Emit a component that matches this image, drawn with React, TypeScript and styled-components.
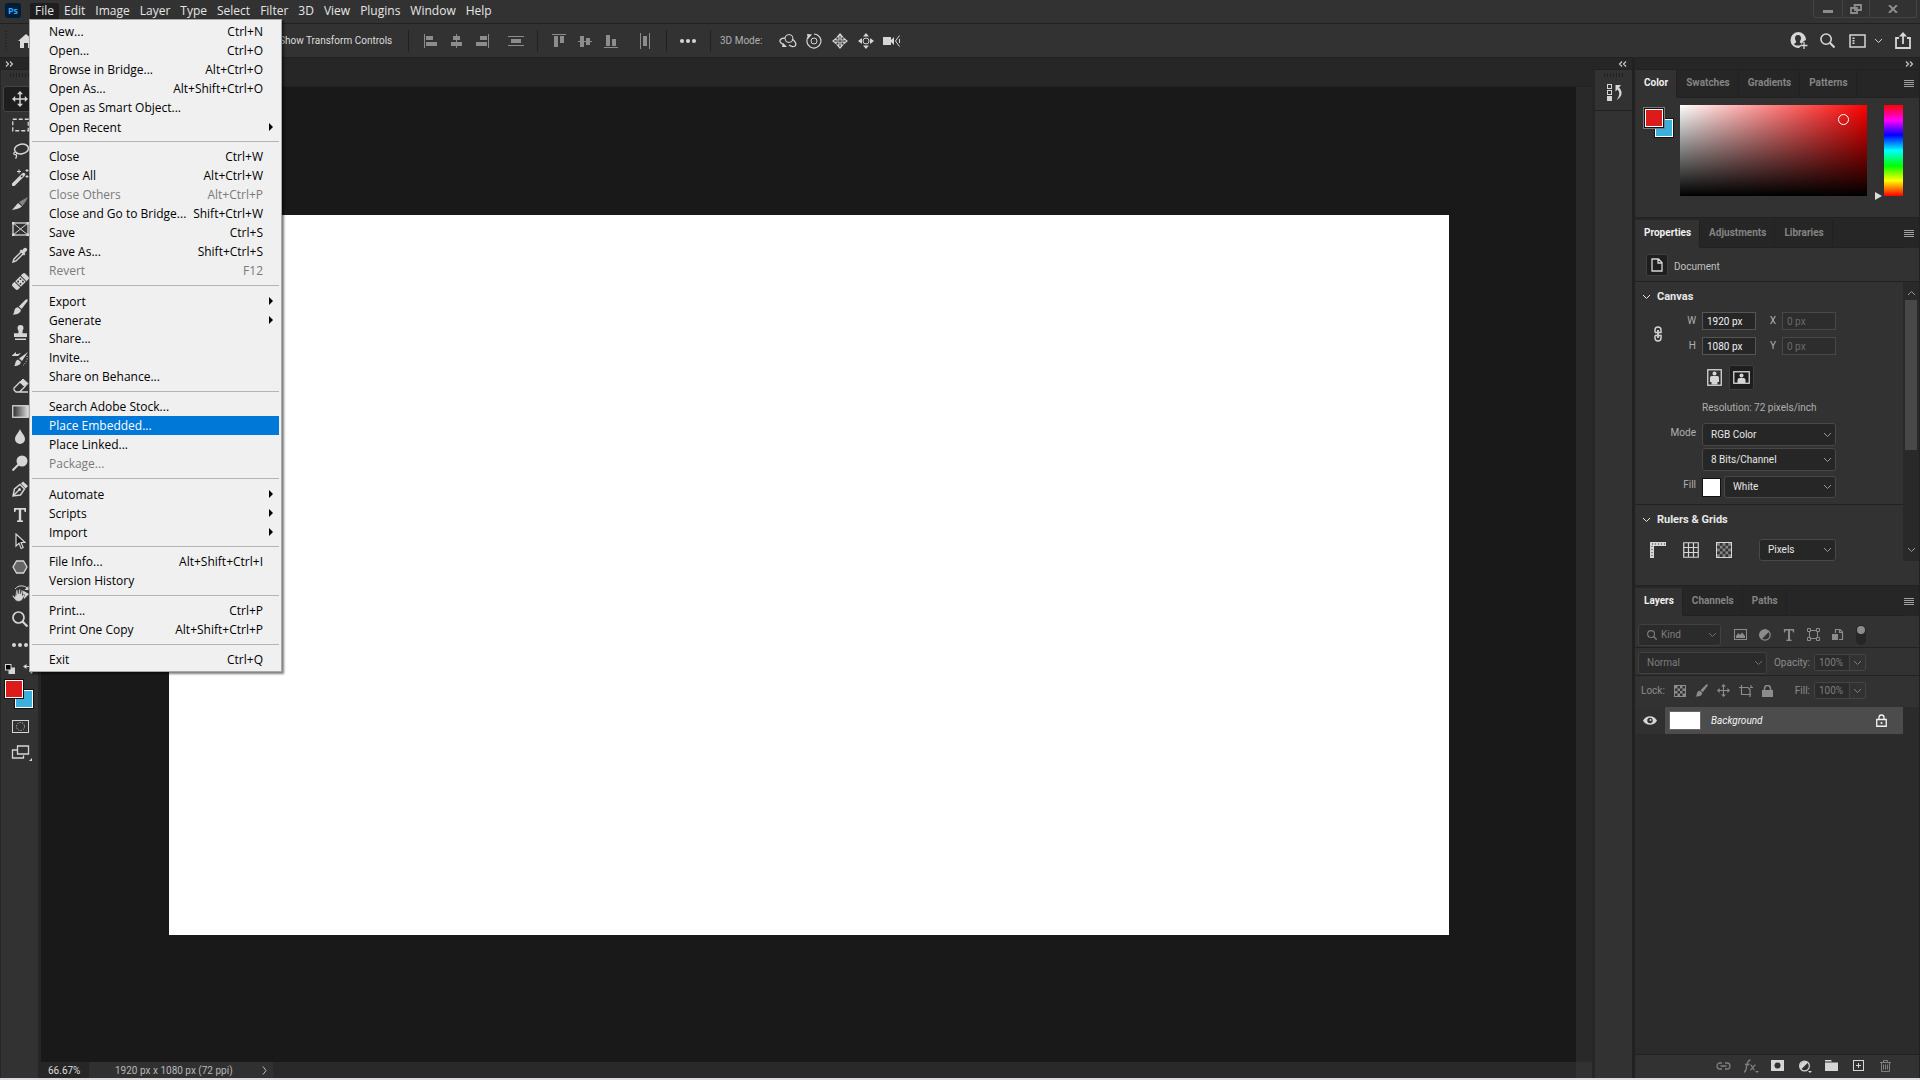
import React from "react";
import styled, { createGlobalStyle, css } from "styled-components";

const c = {
  bar: "#323232",
  dark: "#262626",
  line: "#212121",
  field: "#262626",
  edge: "#484848",
  icon: "#d6d6d6",
  dim: "#8c8c8c",
  text: "#dcdcdc",
};
const font = 'Roboto, "Open Sans", "Liberation Sans", sans-serif';
const menuFont = '"Open Sans", "Noto Sans", "Liberation Sans", sans-serif';

const Global = createGlobalStyle`
  * { box-sizing: border-box; }
  body { margin: 0; background: ${c.dark}; font-family: ${font}; font-size: 10px; line-height: 14px; color: ${c.text}; }
  button, input, select { font: inherit; color: inherit; margin: 0; }
  button { background: none; border: 0; padding: 0; display: flex; align-items: center; justify-content: center; }
  svg { display: block; flex: none; }
`;

const Page = styled.div`
  display: flex;
  flex-direction: column;
  height: 100vh;
  overflow: hidden;
  border-bottom: 2px solid #dfdbdf;
`;

/* ---------- menu bar ---------- */
const MenuBar = styled.header`
  display: flex;
  align-items: flex-start;
  height: 24px;
  padding-left: 5px;
  background: ${c.bar};
  border-bottom: 1px solid ${c.line};
  font-family: ${menuFont};
  font-size: 12px;
`;
const Logo = styled.div`
  width: 16px;
  height: 15px;
  margin: 3px 9px 0 0;
  border-radius: 3px;
  background: #001e36;
  color: #31a8ff;
  font-size: 9px;
  font-weight: 700;
  line-height: 15px;
  text-align: center;
`;
const MenuNav = styled.nav`
  display: flex;
  flex: 1;
  padding-top: 3px;
`;
const MenuSlot = styled.div`
  position: relative;
`;
const MenuTop = styled.button<{ $open?: boolean }>`
  height: 16px;
  padding: 0 5px;
  border-radius: 2px 2px 0 0;
  color: #e6e6e6;
  background: ${(p) => (p.$open ? "#1e1e1e" : "transparent")};
`;
const Dropdown = styled.div`
  position: absolute;
  z-index: 10;
  top: 16px;
  left: -1px;
  width: 253px;
  padding: 2px;
  border: 1px solid #a8a8a8;
  background: #f0f0f0;
  box-shadow: 2px 2px 2px rgba(0, 0, 0, 0.5);
`;
const MenuItem = styled.button<{ $active?: boolean; $sub?: boolean }>`
  width: 100%;
  height: 19px;
  padding: ${(p) => (p.$sub ? 2 : 0)}px 16px 0 17px;
  justify-content: space-between;
  white-space: nowrap;
  color: ${(p) => (p.$active ? "#fff" : "#000")};
  background: ${(p) => (p.$active ? "#0078d7" : "transparent")};
  &:disabled { color: #7a7a7a; }
`;
const SubArrow = styled.span`
  width: 4px;
  margin: 0 -10px 2px 0;
  border: 4px solid transparent;
  border-right: 0;
  border-left-color: #000;
`;
const MenuRule = styled.hr`
  height: 1px;
  margin: 5px 0;
  border: 0;
  background: #b4b4b4;
`;
const WindowControls = styled.div`
  display: grid;
  grid-template-columns: 28px 27px 47px;
  height: 18px;
  margin-right: 3px;
  border: 1px solid #444;
  border-top: 0;
  border-radius: 0 0 3px 3px;
  color: ${c.dim};
  button + button { border-left: 1px solid #444; }
`;

/* ---------- options bar ---------- */
const OptionsBar = styled.div`
  display: flex;
  align-items: center;
  height: 34px;
  padding: 0 9px 0 5px;
  background: ${c.bar};
  border-bottom: 1px solid ${c.line};
`;
const GripV = styled.span`
  width: 2px;
  height: 20px;
  margin-right: 10px;
  background: repeating-linear-gradient(${c.line} 0 1px, transparent 1px 3px);
`;
const CheckLabel = styled.label`
  display: flex;
  align-items: center;
  gap: 5px;
  margin-left: 227px;
  width: 146px;
  white-space: nowrap;
  input { width: 12px; height: 12px; }
`;
const Divider = styled.span`
  width: 1px;
  height: 22px;
  background: ${c.line};
`;
const IconGroup = styled.div<{ $gap?: number; $color?: string; $pad?: string }>`
  display: flex;
  align-items: center;
  gap: ${(p) => p.$gap ?? 12}px;
  padding: ${(p) => p.$pad ?? "0"};
  color: ${(p) => p.$color ?? c.icon};
`;
const Caption = styled.span`
  color: #b0b0b0;
`;
const Spacer = styled.span`
  flex: 1;
`;

/* ---------- workspace ---------- */
const Workspace = styled.div`
  display: flex;
  flex: 1;
  min-height: 0;
`;
const Column = styled.div<{ $w: number }>`
  display: flex;
  flex-direction: column;
  flex: none;
  width: ${(p) => p.$w}px;
`;
const Collapse = styled.div<{ $end?: boolean }>`
  display: flex;
  align-items: center;
  justify-content: ${(p) => (p.$end ? "flex-end" : "flex-start")};
  height: 12px;
  padding: 0 5px;
  background: ${c.dark};
  border-bottom: 1px solid ${c.line};
  color: #c8c8c8;
`;
const Toolbox = styled.aside`
  flex: 1;
  display: flex;
  flex-direction: column;
  margin: 0 3px 0 1px;
  background: ${c.bar};
`;
const Grip = styled.span`
  width: 20px;
  height: 4px;
  margin: 3px auto 9px;
  background: repeating-linear-gradient(90deg, ${c.line} 0 1px, transparent 1px 3px);
`;
const Tool = styled.button<{ $on?: boolean }>`
  width: 34px;
  height: 26px;
  margin-left: 2px;
  border-radius: 3px;
  color: ${c.icon};
  ${(p) => p.$on && css`background: #1e1e1e; border: 1px solid #444;`}
`;
const MiniRow = styled.div`
  display: flex;
  justify-content: space-between;
  padding: 6px 4px 5px;
  color: ${c.icon};
`;
const Swatches = styled.div<{ $framed?: boolean }>`
  position: relative;
  width: 30px;
  height: 30px;
  margin: ${(p) => (p.$framed ? "3px 0 0 1px" : "0 0 4px 3px")};
`;
const Swatch = styled.button<{ $c: string; $back?: boolean; $framed?: boolean }>`
  position: absolute;
  width: 20px;
  height: 20px;
  ${(p) => (p.$back ? "right: 0; bottom: 0;" : "left: 0; top: 0;")}
  border: 1px solid #111;
  background: ${(p) => p.$c};
  box-shadow: inset 0 0 0 1px #fff${(p) => (p.$framed ? ", 0 0 0 1px #7a7a7a" : "")};
`;

const Document = styled.main`
  flex: 1;
  min-width: 0;
  display: flex;
  flex-direction: column;
`;
const TabStrip = styled.div`
  height: 29px;
  background: ${c.dark};
  border-bottom: 1px solid ${c.line};
`;
const Stage = styled.div`
  flex: 1;
  display: flex;
  background: #191919;
`;
const Board = styled.div`
  flex: 1;
  display: flex;
  align-items: center;
  justify-content: center;
`;
const Artboard = styled.div`
  width: 1280px;
  max-width: 90%;
  aspect-ratio: 16 / 9;
  background: #fff;
`;
const Lane = styled.div`
  width: 16px;
  background: #292929;
`;
const Corner = styled.span`
  width: 16px;
  margin-left: auto;
  background: ${c.bar};
`;
const StatusBar = styled.footer`
  display: flex;
  height: 16px;
  line-height: 17px;
  background: #292929;
`;
const Zoom = styled.span`
  width: 48px;
  padding-left: 7px;
  background: ${c.dark};
`;
const DocSize = styled.button`
  width: 184px;
  padding: 0 6px 0 26px;
  justify-content: space-between;
  background: #303030;
  color: #b8b8b8;
`;

/* ---------- panels ---------- */
const Dock = styled.div`
  flex: 1;
  margin: 0 0 0 3px;
  background: ${c.bar};
`;
const DockGroup = styled.div`
  display: flex;
  flex-direction: column;
  align-items: center;
  height: 41px;
  border-bottom: 1px solid ${c.line};
  color: ${c.icon};
  ${Grip} { margin-bottom: 6px; }
`;
const Panels = styled(Column)`
  border-left: 3px solid ${c.line};
  border-right: 1px solid ${c.line};
`;
const Panel = styled.section<{ $grow?: boolean }>`
  display: flex;
  flex-direction: column;
  background: ${c.bar};
  ${(p) => p.$grow ? "flex: 1; min-height: 0;" : `border-bottom: 1px solid ${c.line}; margin-bottom: 2px;`}
`;
const Tabs = styled.div`
  display: flex;
  height: 28px;
  padding-right: 5px;
  background: ${c.dark};
`;
const Tab = styled.button<{ $on?: boolean }>`
  padding: 0 8px 2px 9px;
  font-weight: 700;
  border-right: 1px solid ${c.line};
  border-bottom: 1px solid ${(p) => (p.$on ? c.bar : c.line)};
  color: ${(p) => (p.$on ? "#f0f0f0" : "#848484")};
  background: ${(p) => (p.$on ? c.bar : "transparent")};
`;
const TabFill = styled.span`
  flex: 1;
  border-bottom: 1px solid ${c.line};
`;
const PanelMenu = styled.button`
  color: #a0a0a0;
`;
const ColorBody = styled.div`
  display: flex;
  padding: 7px 16px 21px 8px;
`;
const Field = styled.div`
  position: relative;
  flex: 1;
  height: 91px;
  margin-left: 6px;
  background: linear-gradient(to top, #000, transparent), linear-gradient(to right, #fff, #f00);
`;
const Ring = styled.span`
  position: absolute;
  top: 9px;
  right: 18px;
  width: 11px;
  height: 11px;
  border: 1px solid #fff;
  border-radius: 50%;
`;
const Pointer = styled.span`
  align-self: flex-end;
  width: 7px;
  margin: 0 2px -4px 8px;
  border: 4px solid transparent;
  border-right: 0;
  border-left: 7px solid #dcdcdc;
`;
const Hue = styled.div`
  width: 19px;
  background: linear-gradient(#f00, #f0f 17%, #00f 33%, #0ff 50%, #0f0 67%, #ff0 83%, #f00);
`;

const DocRow = styled.div`
  display: flex;
  align-items: center;
  gap: 6px;
  height: 34px;
  padding-left: 11px;
  border-bottom: 1px solid ${c.line};
  color: #c0c0c0;
  span { padding-top: 4px; }
`;
const IconBox = styled.button<{ $w?: number }>`
  width: ${(p) => p.$w ?? 22}px;
  height: ${(p) => p.$w ?? 22}px;
  border: 1px solid #3e3e3e;
  border-radius: 2px;
  background: #1e1e1e;
  color: ${c.icon};
`;
const PropScroll = styled.div`
  display: flex;
  margin-bottom: 24px;
`;
const PropContent = styled.div`
  flex: 1;
`;
const ScrollBar = styled.div`
  flex: none;
  width: 16px;
  display: flex;
  flex-direction: column;
  align-items: center;
  padding: 8px 0;
  background: #292929;
  color: #9a9a9a;
`;
const Thumb = styled.div`
  width: 12px;
  height: 150px;
  margin: 4px 0 auto;
  background: #484848;
`;
const Section = styled.div<{ $last?: boolean }>`
  padding: 0 0 ${(p) => (p.$last ? 0 : 6)}px 14px;
  ${(p) => !p.$last && `border-bottom: 1px solid ${c.line};`}
`;
const Heading = styled.button`
  gap: 6px;
  height: 30px;
  margin-left: -7px;
  font-size: 11px;
  font-weight: 700;
  color: #e8e8e8;
`;
const Row = styled.div<{ $top?: number }>`
  display: grid;
  grid-template-columns: 18px 23px 54px 14px 54px;
  column-gap: 6px;
  row-gap: 7px;
  align-items: center;
  margin-top: ${(p) => p.$top ?? 0}px;
  color: #b0b0b0;
`;
const LinkCell = styled.button`
  grid-row: span 2;
  color: ${c.icon};
`;
const Label = styled.label<{ $wide?: boolean }>`
  text-align: right;
  ${(p) => p.$wide && "grid-column: span 2; padding-bottom: 4px;"}
`;
const Wide = styled.div`
  grid-column: 3 / -1;
  display: flex;
  align-items: center;
  gap: 3px;
`;
const Input = styled.input`
  width: 100%;
  height: 18px;
  padding: 0 4px;
  border: 1px solid #555;
  background: ${c.field};
  color: #f0f0f0;
  &:disabled { border-color: #484848; background: #2d2d2d; color: #6a6a6a; }
`;
const SelectBox = styled.div<{ $w?: number; $h?: number; $dim?: boolean }>`
  display: grid;
  align-items: center;
  ${(p) => (p.$w ? `width: ${p.$w}px;` : "flex: 1;")}
  height: ${(p) => p.$h ?? 22}px;
  border: 1px solid ${(p) => (p.$dim ? "#404040" : c.edge)};
  border-radius: 3px;
  background: ${(p) => (p.$dim ? "#2b2b2b" : c.field)};
  color: ${(p) => (p.$dim ? "#7c7c7c" : "#e6e6e6")};
  > * { grid-area: 1 / 1; }
  > svg { justify-self: end; margin-right: 3px; color: #9a9a9a; pointer-events: none; opacity: ${(p) => (p.$dim ? 0.6 : 1)}; }
`;
const Select = styled.select<{ $pad?: number }>`
  appearance: none;
  width: 100%;
  height: 100%;
  padding: 0 16px 0 ${(p) => p.$pad ?? 8}px;
  border: 0;
  background: none;
  opacity: 1;
`;
const SearchSlot = styled.span`
  justify-self: start;
  margin-left: 8px;
  pointer-events: none;
`;
const FillChip = styled.span`
  width: 19px;
  height: 19px;
  border: 1px solid #111;
  background: #fff;
`;
const RulerRow = styled.div`
  display: flex;
  align-items: center;
  justify-content: space-between;
  padding: 4px 67px 0 1px;
  color: ${c.icon};
`;

const LayerRow = styled.div<{ $h: number; $top?: number; $bottom?: number; $line?: boolean }>`
  display: flex;
  align-items: center;
  height: ${(p) => p.$h}px;
  padding: ${(p) => p.$top ?? 0}px 53px ${(p) => p.$bottom ?? 0}px 3px;
  color: #8c8c8c;
  ${(p) => p.$line && `border-bottom: 1px solid ${c.line};`}
  label { margin-left: auto; padding-right: 4px; }
`;
const Percent = styled.div`
  display: flex;
  width: 52px;
  height: 17px;
  border: 1px solid #444;
  border-radius: 2px;
  color: #7c7c7c;
  input { width: 35px; padding: 0 4px; border: 0; border-right: 1px solid #444; background: #2b2b2b; }
  button { flex: 1; }
`;
const Toggle = styled.button`
  width: 10px;
  height: 20px;
  padding-top: 1px;
  align-items: flex-start;
  border-radius: 5px;
  background: #262626;
  &::before { content: ""; width: 8px; height: 8px; border-radius: 50%; background: #8c8c8c; }
`;
const LayerList = styled.div`
  flex: 1;
  background: #2b2b2b;
`;
const Layer = styled.div`
  display: flex;
  height: 27px;
`;
const Eye = styled.button`
  width: 30px;
  background: #303030;
  color: ${c.icon};
`;
const LayerBody = styled.div`
  flex: 1;
  display: flex;
  align-items: center;
  gap: 10px;
  margin-right: 16px;
  padding: 0 16px 0 4px;
  background: #4c4c4c;
  font-style: italic;
  color: #f4f4f4;
`;
const Thumbnail = styled.span`
  width: 32px;
  height: 19px;
  border: 1px solid #666;
  background: #fff;
`;
const LayerFooter = styled.div`
  display: flex;
  align-items: center;
  justify-content: flex-end;
  height: 24px;
  padding: 0 20px 2px 0;
  border-top: 1px solid ${c.line};
`;
const FooterButton = styled.button<{ $faint?: boolean }>`
  width: 27px;
  color: ${(p) => (p.$faint ? "#808080" : c.icon)};
`;

/* ---------- drawings ---------- */
type IcoProps = { w?: number; h?: number; children: React.ReactNode };
const Ico = ({ w = 16, h = 16, children }: IcoProps) => (
  <svg width={w} height={h} viewBox={`0 0 ${w} ${h}`} fill="none" stroke="currentColor" aria-hidden="true">
    {children}
  </svg>
);
const F = { fill: "currentColor", stroke: "none" };

const Chevron = () => <Ico w={9} h={6}><path d="M1 1l3.500 3.500L8 1" /></Ico>;
const ChevronUp = () => <Ico w={9} h={6}><path d="M1 5l3.500-3.500L8 5" /></Ico>;
const Double = ({ left }: { left?: boolean }) => (
  <Ico w={9} h={6}><path d={left ? "M4 .5L1.500 3 4 5.500M8 .5L5.500 3 8 5.500" : "M1 .5L3.500 3 1 5.500M5 .5L7.500 3 5 5.500"} strokeWidth="1.200" /></Ico>
);
const Burger = () => <Ico w={10} h={8}><path d="M0 .5h10M0 2.500h10M0 4.500h10M0 6.500h10" /></Ico>;
const Dots = () => <Ico w={16} h={6}><g {...F}><circle cx="2" cy="3" r="2" /><circle cx="8" cy="3" r="2" /><circle cx="14" cy="3" r="2" /></g></Ico>;
const MoveGlyph = ({ s = 16 }: { s?: number }) => (
  <svg width={s} height={s} viewBox="0 0 16 16" fill="currentColor" aria-hidden="true">
    <path d="M8 0l3 3.200H8.700v4.100h4.100V5L16 8l-3.200 3V8.700H8.700v4.100H11L8 16l-3-3.200h2.300V8.700H3.200V11L0 8l3.200-3v2.300h4.100V3.200H5z" />
  </svg>
);
const BrushGlyph = ({ s = 16 }: { s?: number }) => (
  <svg width={s} height={s} viewBox="0 0 16 16" fill="currentColor" aria-hidden="true">
    <path d="M15.500.5c.5.500.3 1.300-.2 2L9.600 10 6.800 7.600 13.500.8c.700-.6 1.500-.8 2-.3zM6 8.300l2.800 2.400c.2 2.500-2 4.800-8.300 4.800 2-1.500 1.500-3 2-4.500.5-1.700 2-2.700 3.500-2.700z" />
  </svg>
);
const SearchGlyph = ({ s = 16 }: { s?: number }) => (
  <svg width={s} height={s} viewBox="0 0 16 16" fill="none" stroke="currentColor" strokeWidth="1.700" aria-hidden="true">
    <circle cx="6.500" cy="6.500" r="5.500" /><path d="M10.500 10.500l5 5" strokeWidth="2.200" />
  </svg>
);
const TGlyph = ({ s = 14 }: { s?: number }) => (
  <svg width={s} height={s} viewBox="0 0 14 14" fill="currentColor" aria-hidden="true">
    <path d="M1 0h12v4h-1.300L11 1.800H8.200v10.400l1.800.4V14H4v-1.400l1.800-.4V1.800H3L2.300 4H1z" />
  </svg>
);
const HalfCircle = ({ s = 12 }: { s?: number }) => (
  <svg width={s} height={s} viewBox="0 0 12 12" fill="none" stroke="currentColor" strokeWidth="1.200" aria-hidden="true">
    <circle cx="6" cy="6" r="5.200" /><path d="M9.700 2.300A5.200 5.200 0 0 0 2.300 9.700z" fill="currentColor" />
  </svg>
);
const Checker = ({ w = 12 }: { w?: number }) => {
  const n = w === 12 ? 4 : 5;
  const cells = [];
  for (let y = 0; y < n; y++) for (let x = 0; x < n; x++) if ((x + y) % 2 === 0) cells.push(<rect key={`${x}-${y}`} x={1 + (x * (w - 2)) / n} y={1 + (y * (w - 2)) / n} width={(w - 2) / n} height={(w - 2) / n} />);
  return <Ico w={w} h={w}><rect x=".5" y=".5" width={w - 1} height={w - 1} /><g {...F} opacity={w === 12 ? 1 : 0.5}>{cells}</g></Ico>;
};

const tools: [string, React.ReactNode][] = [
  ["Move", <MoveGlyph />],
  ["Marquee", <Ico w={17} h={14}><rect x=".75" y="1.250" width="15.500" height="11.500" strokeWidth="1.300" strokeDasharray="4 2" /></Ico>],
  ["Lasso", <Ico w={17} h={16}><ellipse cx="9.500" cy="6" rx="7" ry="4.800" strokeWidth="1.500" transform="rotate(-10 9.500 6)" /><path d="M3 9c-2 1-1.500 2.800.3 2.600s1.700-2.200.2-2.400M4 11.500c1 1.500.5 3-.5 4" strokeWidth="1.200" /></Ico>],
  ["Magic wand", <Ico w={17} h={17}><path d="M1.500 15.500L10 7l1.500-1.500" strokeWidth="3.500" strokeLinecap="round" /><path d="M9 8l1.500-1.500" stroke="#323232" strokeWidth="1.500" /><path d="M7 .5v4M5 2.500h4M15 0v3M13.500 1.500h3M15 6v3M13.500 7.500h3" /></Ico>],
  ["Slice", <Ico w={17} h={15}><path d="M0 14l6-7 4 3.500C7 13 3 13.500 0 14z" {...F} /><path d="M7 6l9-5-2 4-3.500 5z" {...F} opacity=".5" /></Ico>],
  ["Frame", <Ico w={17} h={14}><rect x="1" y="1" width="15" height="12" strokeWidth="1.300" /><path d="M1 1l15 12M16 1L1 13" /><path d="M0 0h2.500v2.500H0zM14.500 0H17v2.500h-2.500zM0 11.500h2.500V14H0zM14.500 11.500H17V14h-2.500z" {...F} /></Ico>],
  ["Eyedropper", <Ico w={16} h={16}><path d="M9 5L2 12l-1 3 3-1 7-7" strokeWidth="1.400" /><path d="M7.500 4L9 2.500l1.200 1C11.500 1.500 13 0 14.600 1.400S14.500 4.500 12.500 6l1 1L12 8.500z" {...F} /></Ico>],
  ["Healing brush", <Ico w={17} h={17}><g transform="rotate(-45 8.500 8.500)"><path d="M1.500 4.500h2.500v8H1.500a2 2 0 0 1-2-2v-4a2 2 0 0 1 2-2zM13 4.500h2.500a2 2 0 0 1 2 2v4a2 2 0 0 1-2 2H13z" {...F} /><path d="M5 4.500h7v8H5z" {...F} /><g fill="#323232" stroke="none"><circle cx="6.800" cy="6.800" r=".9" /><circle cx="10.200" cy="6.800" r=".9" /><circle cx="6.800" cy="10.200" r=".9" /><circle cx="10.200" cy="10.200" r=".9" /></g></g></Ico>],
  ["Brush", <BrushGlyph />],
  ["Clone stamp", <Ico w={15} h={16}><path d="M7.500 0a3 3 0 0 1 3 3c0 1.500-1 2.300-1 3.500v1.800H14V12H1V8.300h4.500V6.500c0-1.200-1-2-1-3.500a3 3 0 0 1 3-3zM2 13.500h11V15H2z" {...F} /></Ico>],
  ["History brush", <Ico w={17} h={16}><path d="M16 1l-6 9-3-2.500zM6 8.500l2.800 2.500c0 2-2 4-6.800 4 1.200-1 1-2 1.400-3.500S5 8.800 6 8.500zM0 4.500L4 1v2c2 0 3.500-.5 5-1L6 5H0z" {...F} /><path d="M15 5c1 3-1 7-4 9.500" strokeDasharray="1 1.500" /></Ico>],
  ["Eraser", <Ico w={17} h={15}><path d="M8 4l5 4.500L16 5.500 11 1z" fill="currentColor" /><path d="M8 4l-6 6v2l2 2h3.500L13 8.500zM6 14h10" strokeWidth="1.300" /></Ico>],
  ["Gradient", <Ico w={17} h={13}><defs><linearGradient id="ramp"><stop stopColor="#2a2a2a" /><stop offset="1" stopColor="#ddd" /></linearGradient></defs><rect x=".75" y=".75" width="15.500" height="11.500" fill="url(#ramp)" strokeWidth="1.300" /></Ico>],
  ["Blur", <Ico w={12} h={16}><path d="M6 0c1.500 4 5 6.500 5 10a5 5 0 0 1-10 0c0-3.500 3.500-6 5-10z" {...F} /></Ico>],
  ["Dodge", <Ico w={16} h={16}><circle cx="10" cy="6" r="5.500" {...F} /><path d="M7 9l-6.500 6.500" strokeWidth="2" /></Ico>],
  ["Pen", <Ico w={16} h={16}><path d="M1 15l1.500-7L8 3.500l4.500 4.500L8.500 14zM1 15l6-6" strokeWidth="1.400" /><circle cx="7.500" cy="8.500" r="1.500" {...F} /><path d="M9 2.500l2-2 5 4.500-2.500 2.500z" {...F} /></Ico>],
  ["Type", <TGlyph />],
  ["Path selection", <Ico w={12} h={17}><path d="M2 1v12l3-2.800 2.200 5.300 2-1L7 9.500h4z" fill="#1c1c1c" strokeWidth="1.200" /></Ico>],
  ["Polygon", <Ico w={16} h={14}><path d="M4.500 1h7L15 7l-3.500 6h-7L1 7z" fill="#666" strokeWidth="1.300" /></Ico>],
  ["Hand", <Ico w={17} h={17}><path d="M3 4C6 0 12 0 15 3" /><path d="M16.500 1v4h-4zM10 5l7 4-5 5z" {...F} /><path d="M3 6.500l1 4V5l1.500-.2.7 4L7 4l1.400.3-.2 4.700 1.500-4 1.300.6-.8 5L12 9l1 1-3 5c-1 1.500-5 2-6.500.2L0 11l1-.8L3 12z" fill="currentColor" stroke="#323232" strokeWidth=".5" /></Ico>],
  ["Zoom", <SearchGlyph />],
  ["More tools", <Dots />],
];

type Entry = [string, string?, ("sub" | "off" | "on")?];
const fileMenu: Entry[][] = [
  [["New...", "Ctrl+N"], ["Open...", "Ctrl+O"], ["Browse in Bridge...", "Alt+Ctrl+O"], ["Open As...", "Alt+Shift+Ctrl+O"], ["Open as Smart Object..."], ["Open Recent", "", "sub"]],
  [["Close", "Ctrl+W"], ["Close All", "Alt+Ctrl+W"], ["Close Others", "Alt+Ctrl+P", "off"], ["Close and Go to Bridge...", "Shift+Ctrl+W"], ["Save", "Ctrl+S"], ["Save As...", "Shift+Ctrl+S"], ["Revert", "F12", "off"]],
  [["Export", "", "sub"], ["Generate", "", "sub"], ["Share..."], ["Invite..."], ["Share on Behance..."]],
  [["Search Adobe Stock..."], ["Place Embedded...", "", "on"], ["Place Linked..."], ["Package...", "", "off"]],
  [["Automate", "", "sub"], ["Scripts", "", "sub"], ["Import", "", "sub"]],
  [["File Info...", "Alt+Shift+Ctrl+I"], ["Version History"]],
  [["Print...", "Ctrl+P"], ["Print One Copy", "Alt+Shift+Ctrl+P"]],
  [["Exit", "Ctrl+Q"]],
];
const menus = ["Edit", "Image", "Layer", "Type", "Select", "Filter", "3D", "View", "Plugins", "Window", "Help"];

function FileMenu() {
  return (
    <Dropdown role="menu">
      {fileMenu.map((group, i) => (
        <React.Fragment key={i}>
          {i > 0 && <MenuRule />}
          {group.map(([name, keys, kind]) => (
            <MenuItem key={name} role="menuitem" disabled={kind === "off"} $active={kind === "on"} $sub={kind === "sub"}>
              <span>{name}</span>
              {kind === "sub" ? <SubArrow /> : <span>{keys}</span>}
            </MenuItem>
          ))}
        </React.Fragment>
      ))}
    </Dropdown>
  );
}

function Options() {
  return (
    <OptionsBar>
      <GripV />
      <Ico w={18} h={16}><path d="M9 1l8 7h-2v7h-4v-5H7v5H3V8H1z" {...F} /></Ico>
      <CheckLabel><input type="checkbox" />Show Transform Controls</CheckLabel>
      <Divider />
      <IconGroup $pad="0 13px 0 15px" $color="#8c8c8c">
        <Ico w={14} h={14}><path d="M.5 0v14" /><path d="M2 2h7v4H2zM2 8h11v4H2z" {...F} /></Ico>
        <Ico w={14} h={14}><path d="M6.500 0v14" /><path d="M3 2h7v4H3zM1 8h11v4H1z" {...F} /></Ico>
        <Ico w={14} h={14}><path d="M12.500 0v14" /><path d="M4 2h7v4H4zM0 8h11v4H0z" {...F} /></Ico>
        <IconGroup $pad="0 0 0 6px" $color="inherit">
          <Ico w={16} h={12}><path d="M0 1.500h16M0 10.500h16" /><path d="M3 4h10v4H3z" {...F} /></Ico>
        </IconGroup>
      </IconGroup>
      <Divider />
      <IconGroup $pad="0 14px" $color="#8c8c8c">
        <Ico w={14} h={14}><path d="M0 .5h14" /><path d="M2 2h4v11H2zM8 2h4v7H8z" {...F} /></Ico>
        <Ico w={14} h={14}><path d="M0 7.500h14" /><path d="M2 2h4v11H2zM8 4h4v7H8z" {...F} /></Ico>
        <Ico w={14} h={14}><path d="M0 13.500h14" /><path d="M2 1h4v11H2zM8 5h4v7H8z" {...F} /></Ico>
        <IconGroup $pad="0 0 0 8px" $color="inherit">
          <Ico w={14} h={16}><path d="M2.500 0v16M11.500 0v16" /><path d="M5 3h4v10H5z" {...F} /></Ico>
        </IconGroup>
      </IconGroup>
      <Divider />
      <IconGroup $pad="0 14px 0 13px"><Dots /></IconGroup>
      <Divider />
      <IconGroup $pad="0 0 0 9px" $gap={17}>
        <Caption>3D Mode:</Caption>
        <IconGroup $gap={8}>
          <Ico w={18} h={16}><circle cx="10" cy="5.500" r="4" /><path d="M6 5C2 5 0 7 1.500 9.500L5 12M13 6c3 2 5 5 3 7-1.500 1-4 .5-6-1" strokeWidth="1.300" /><path d="M3 14l1-4 4 4z" {...F} /></Ico>
          <Ico w={18} h={16}><circle cx="9" cy="8" r="3" /><path d="M4 3a7 7 0 1 0 5-2" strokeWidth="1.200" /><path d="M2 1l5 .5L3 6z" {...F} /></Ico>
          <Ico w={18} h={16}><path d="M9 1l2.500 3H10v3h3V5.500L16 8l-3 2.500V9h-3v3h1.500L9 15l-2.500-3H8V9H5v1.500L2 8l3-2.500V7h3V4H6.500z" strokeWidth="1.200" /></Ico>
          <Ico w={18} h={16}><circle cx="9" cy="8" r="3" /><path d="M9 0l3 3.500H6zM9 16l-3-3.500h6zM1 8l4-3v6zM17 8l-4-3v6z" {...F} /></Ico>
          <Ico w={18} h={14}><path d="M0 3h8v8H0zM8 6l3-3v8L8 8z" {...F} /><path d="M16.500 1.500L12.500 7l4 5.500M16.500 5v4" /></Ico>
        </IconGroup>
      </IconGroup>
      <Spacer />
      <IconGroup>
        <Ico w={18} h={18}><path d="M8 0a8 8 0 0 1 8 8l-2 1a8 8 0 0 0-3 5l-2 2A8 8 0 1 1 8 0z" {...F} /><path d="M8 3c2.200 0 3 1.500 3 3.200S9.800 9 9.800 10s1.700 1 2.200 2c-1 2-7 2-8 0 .5-1 2.200-1 2.200-2S5 8 5 6.200 5.800 3 8 3z" fill="#323232" stroke="none" /><path d="M14 10v7M10.500 13.500h7" strokeWidth="1.300" /></Ico>
        <SearchGlyph s={15} />
        <IconGroup $pad="0 0 0 2px" $gap={8}>
          <Ico w={17} h={14}><rect x="1" y="1" width="15" height="12" strokeWidth="1.500" /><path d="M4.500 3.500v7" strokeWidth="2" strokeDasharray="1.500 1" /></Ico>
          <Chevron />
        </IconGroup>
        <Ico w={16} h={17}><path d="M4 6H1v10h14V6h-3M8 12V2" strokeWidth="1.800" /><path d="M4 4.500L8 0l4 4.500z" {...F} /></Ico>
      </IconGroup>
    </OptionsBar>
  );
}

function PanelTabs({ names }: { names: string[] }) {
  return (
    <Tabs role="tablist">
      {names.map((n, i) => <Tab key={n} role="tab" aria-selected={i === 0} $on={i === 0}>{n}</Tab>)}
      <TabFill />
      <PanelMenu aria-label="Panel menu"><Burger /></PanelMenu>
    </Tabs>
  );
}

function ColorPanel() {
  return (
    <Panel>
      <PanelTabs names={["Color", "Swatches", "Gradients", "Patterns"]} />
      <ColorBody>
        <Swatches $framed>
          <Swatch $c="#3bb0dc" $back aria-label="Background color" />
          <Swatch $c="#dc1b1b" $framed aria-label="Foreground color" />
        </Swatches>
        <Field><Ring /></Field>
        <Pointer />
        <Hue />
      </ColorBody>
    </Panel>
  );
}

function PropertiesPanel() {
  return (
    <Panel>
      <PanelTabs names={["Properties", "Adjustments", "Libraries"]} />
      <DocRow>
        <IconBox aria-label="Document"><Ico w={12} h={14}><path d="M1 1h6.500L11 4.500V13H1zM7 1v4h4" strokeWidth="1.300" /></Ico></IconBox>
        <span>Document</span>
      </DocRow>
      <PropScroll>
        <PropContent>
          <Section>
            <Heading><Chevron />Canvas</Heading>
            <Row>
              <LinkCell aria-label="Link width and height"><Ico w={10} h={16}><path d="M2 6.500V4a3 3 0 0 1 6 0v2.500H6M2 6.500h2M2 9.500V12a3 3 0 0 0 6 0V9.500H6M2 9.500h2" strokeWidth="1.400" /><path d="M5 4v8" strokeWidth="1.800" /></Ico></LinkCell>
              <Label htmlFor="w">W</Label><Input id="w" defaultValue="1920 px" />
              <Label htmlFor="x">X</Label><Input id="x" defaultValue="0 px" disabled />
              <Label htmlFor="h">H</Label><Input id="h" defaultValue="1080 px" />
              <Label htmlFor="y">Y</Label><Input id="y" defaultValue="0 px" disabled />
            </Row>
            <Row $top={10}>
              <Wide>
                <IconGroup $pad="0 4px 0 5px">
                  <Ico w={15} h={17}><rect x=".75" y=".75" width="13.500" height="15.500" strokeWidth="1.300" /><circle cx="7.500" cy="4.500" r="2" {...F} /><path d="M3 9c0-1.500 1-2 2-2h5c1 0 2 .5 2 2v4h-1.500v2.500h-6V13H3z" {...F} /></Ico>
                </IconGroup>
                <IconBox $w={25} aria-label="Landscape"><Ico w={17} h={13}><rect x=".75" y=".75" width="15.500" height="11.500" strokeWidth="1.300" /><circle cx="8.500" cy="4.500" r="2" {...F} /><path d="M4.500 12V9c0-1.300 1-2 2-2h4c1 0 2 .7 2 2v3z" {...F} /></Ico></IconBox>
              </Wide>
            </Row>
            <Row $top={11}><Wide>Resolution: 72 pixels/inch</Wide></Row>
            <Row $top={8}>
              <Label $wide htmlFor="mode">Mode</Label>
              <Wide><SelectBox $h={23}><Select id="mode"><option>RGB Color</option></Select><Chevron /></SelectBox></Wide>
            </Row>
            <Row $top={2}>
              <Wide><SelectBox $h={23}><Select aria-label="Bit depth"><option>8 Bits/Channel</option></Select><Chevron /></SelectBox></Wide>
            </Row>
            <Row $top={5}>
              <Label $wide htmlFor="fill">Fill</Label>
              <Wide><FillChip /><SelectBox><Select id="fill"><option>White</option></Select><Chevron /></SelectBox></Wide>
            </Row>
          </Section>
          <Section $last>
            <Heading><Chevron />Rulers &amp; Grids</Heading>
            <RulerRow>
              <IconGroup $gap={17}>
                <Ico w={16} h={16}><path d="M0 0h16v4H4v12H0z" {...F} /><path d="M2 2h14M2 4v12" stroke="#323232" strokeDasharray="1 2" /></Ico>
                <Ico w={16} h={16}><path d="M.75 .75h14.500v14.500H.75zM5.500 1v14M10.500 1v14M1 5.500h14M1 10.500h14" strokeWidth="1.200" /></Ico>
                <Checker w={16} />
              </IconGroup>
              <SelectBox $w={77}><Select aria-label="Units"><option>Pixels</option></Select><Chevron /></SelectBox>
            </RulerRow>
          </Section>
        </PropContent>
        <ScrollBar><ChevronUp /><Thumb /><Chevron /></ScrollBar>
      </PropScroll>
    </Panel>
  );
}

function LayersPanel() {
  return (
    <Panel $grow>
      <PanelTabs names={["Layers", "Channels", "Paths"]} />
      <LayerRow $h={32} $top={6} $line>
        <SelectBox $w={89} $dim>
          <Select $pad={22} aria-label="Filter kind" disabled><option>Kind</option></Select>
          <SearchSlot><SearchGlyph s={10} /></SearchSlot>
          <Chevron />
        </SelectBox>
        <IconGroup $pad="0 0 0 13px" $color="#8c8c8c">
          <Ico w={13} h={11}><rect x=".5" y=".5" width="12" height="10" /><path d="M2 9V7l2.500-3L6 6l2-2.500L11 7v2z" {...F} /></Ico>
          <HalfCircle />
          <TGlyph s={12} />
          <Ico w={13} h={13}><path d="M2.500 2.500h8v8h-8z" /><path d="M.5 .5h3v3h-3zM9.500 .5h3v3h-3zM.5 9.500h3v3h-3zM9.500 9.500h3v3h-3z" fill="#323232" /></Ico>
          <Ico w={12} h={13}><path d="M3.500 5V1.500H8L10.500 4v7.500H7M7.500 1.500v3h3" strokeWidth="1.200" /><path d="M0 6h6v6H0z" {...F} /></Ico>
          <Toggle aria-label="Layer filtering" />
        </IconGroup>
      </LayerRow>
      <LayerRow $h={28} $top={2} $line>
        <SelectBox $w={129} $dim><Select aria-label="Blend mode" disabled><option>Normal</option></Select><Chevron /></SelectBox>
        <label htmlFor="opacity">Opacity:</label>
        <Percent><input id="opacity" defaultValue="100%" /><button aria-label="Opacity slider"><Chevron /></button></Percent>
      </LayerRow>
      <LayerRow $h={31} $bottom={2}>
        <IconGroup $gap={9} $pad="0 0 0 3px" $color="#8c8c8c">
          Lock:
          <Checker />
          <BrushGlyph s={13} />
          <MoveGlyph s={13} />
          <Ico w={14} h={12}><path d="M2.500 0v9.500H12M0 2.500h9l2 2V12" strokeWidth="1.200" /><path d="M12 0v2M11 2.500h3" /></Ico>
          <Ico w={11} h={12}><path d="M2.500 5V3.500a3 3 0 0 1 6 0V5" strokeWidth="1.500" /><path d="M0 5h11v7H0z" {...F} /></Ico>
        </IconGroup>
        <label htmlFor="lfill">Fill:</label>
        <Percent><input id="lfill" defaultValue="100%" /><button aria-label="Fill slider"><Chevron /></button></Percent>
      </LayerRow>
      <LayerList>
        <Layer>
          <Eye aria-label="Visibility"><Ico w={14} h={9}><path d="M0 4.500C3-1.300 11-1.300 14 4.500 11 10.300 3 10.300 0 4.500z" {...F} /><circle cx="7" cy="4.500" r="2.700" fill="#303030" stroke="none" /><circle cx="7.500" cy="4" r="1" {...F} /></Ico></Eye>
          <LayerBody>
            <Thumbnail />
            Background
            <Spacer />
            <Ico w={11} h={13}><path d="M3 5.500V3.500a2.500 2.500 0 0 1 5 0v2M.75 5.500h9.500v6.750H.75z" strokeWidth="1.300" /><circle cx="5.500" cy="9" r="1" {...F} /></Ico>
          </LayerBody>
        </Layer>
      </LayerList>
      <LayerFooter>
        <FooterButton $faint aria-label="Link layers"><Ico w={15} h={8}><path d="M6 1H4a3 3 0 0 0 0 6h2M9 1h2a3 3 0 0 1 0 6H9M4.500 4h6" strokeWidth="1.300" /></Ico></FooterButton>
        <FooterButton $faint aria-label="Layer style"><Ico w={16} h={14}><path d="M1 13c2 0 2-2 2.500-5S4.500 1 7.500 1M2 5.500h4.500M7.500 6c2 0 2 5 4 5M12.500 6c-2 0-3.500 5-5.500 5" strokeWidth="1.300" /><path d="M12 12h4l-2 2z" {...F} /></Ico></FooterButton>
        <FooterButton aria-label="Add mask"><Ico w={13} h={11}><path d="M0 0h13v11H0z" {...F} /><circle cx="6.500" cy="5.500" r="3" fill="#323232" stroke="none" /></Ico></FooterButton>
        <FooterButton aria-label="Adjustment layer"><Ico w={15} h={14}><circle cx="7.500" cy="7" r="4.900" strokeWidth="1.200" /><path d="M11 3.500A5 5 0 0 0 4 10.500z" {...F} /><path d="M11 12h4l-2 2z" {...F} /></Ico></FooterButton>
        <FooterButton aria-label="New group"><Ico w={13} h={11}><path d="M0 0h6l1 1.500H0zM0 2.500h13V11H0z" {...F} /></Ico></FooterButton>
        <FooterButton aria-label="New layer"><Ico w={11} h={11}><rect x=".5" y=".5" width="10" height="10" /><path d="M5.500 3v5M3 5.500h5" /></Ico></FooterButton>
        <FooterButton $faint aria-label="Delete"><Ico w={11} h={12}><path d="M0 2.500h11M3.500 2V.5h4V2M1.500 3v8.500h8V3M3.500 4.500v5M5.500 4.500v5M7.500 4.500v5" /></Ico></FooterButton>
      </LayerFooter>
    </Panel>
  );
}

export default function App() {
  return (
    <>
      <Global />
      <Page>
        <MenuBar>
          <Logo>Ps</Logo>
          <MenuNav>
            <MenuSlot><MenuTop $open>File</MenuTop><FileMenu /></MenuSlot>
            {menus.map((m) => <MenuTop key={m}>{m}</MenuTop>)}
          </MenuNav>
          <WindowControls>
            <button aria-label="Minimize"><Ico w={10} h={9}><path d="M0 6h10v3H0z" {...F} /></Ico></button>
            <button aria-label="Restore"><Ico w={12} h={10}><path d="M4.500 1h6.500v5H5zM1 4h6v5H1z" strokeWidth="1.800" /></Ico></button>
            <button aria-label="Close"><Ico w={10} h={8}><path d="M1 0l8 8M9 0L1 8" strokeWidth="2" /></Ico></button>
          </WindowControls>
        </MenuBar>
        <Options />
        <Workspace>
          <Column $w={41}>
            <Collapse><Double /></Collapse>
            <Toolbox>
              <Grip />
              {tools.map(([name, icon], i) => <Tool key={name} aria-label={name} $on={i === 0}>{icon}</Tool>)}
              <MiniRow>
                <Ico w={10} h={10}><path d="M3.500 3.500H10V10H3.500z" {...F} /><rect x=".5" y=".5" width="5.500" height="5.500" fill="#000" /></Ico>
                <Ico w={11} h={10}><path d="M3 2.500h5.500V8" strokeWidth="1.200" /><path d="M0 2.500L3.500 0v5zM6 6.500h5L8.500 10z" {...F} /></Ico>
              </MiniRow>
              <Swatches>
                <Swatch $c="#3bb0dc" $back aria-label="Background color" />
                <Swatch $c="#dc1b1b" aria-label="Foreground color" />
              </Swatches>
              <Tool aria-label="Quick mask"><Ico w={17} h={13}><rect x=".5" y=".5" width="16" height="12" /><circle cx="8.500" cy="6.500" r="4" strokeDasharray="1 1.500" /></Ico></Tool>
              <Tool aria-label="Screen mode"><Ico w={23} h={18}><path d="M8 7H3.500v8h11v-2.500M8.500 3h11v8h-11z" strokeWidth="1.300" /><path d="M23 15v3h-3z" {...F} /></Ico></Tool>
            </Toolbox>
          </Column>
          <Document>
            <TabStrip />
            <Stage>
              <Board><Artboard /></Board>
              <Lane />
            </Stage>
            <StatusBar>
              <Zoom>66.67%</Zoom>
              <DocSize>1920 px x 1080 px (72 ppi)<Ico w={5} h={9}><path d="M1 .5l3 4-3 4" /></Ico></DocSize>
              <Corner />
            </StatusBar>
          </Document>
          <Column $w={40}>
            <Collapse $end><Double left /></Collapse>
            <Dock>
              <DockGroup>
                <Grip />
                <Ico w={16} h={18}><rect x="1.500" y="1.500" width="4" height="4" /><rect x="1.500" y="7.500" width="4" height="4" /><path d="M1 13h5v5H1z" {...F} /><path d="M9.500 2H15l-2 2.500c4 4 3.500 9-2.500 12.500 3.500-4.500 3.500-8 1-10.500l-2 2z" {...F} /></Ico>
              </DockGroup>
            </Dock>
          </Column>
          <Panels $w={288}>
            <Collapse $end><Double /></Collapse>
            <ColorPanel />
            <PropertiesPanel />
            <LayersPanel />
          </Panels>
        </Workspace>
      </Page>
    </>
  );
}
